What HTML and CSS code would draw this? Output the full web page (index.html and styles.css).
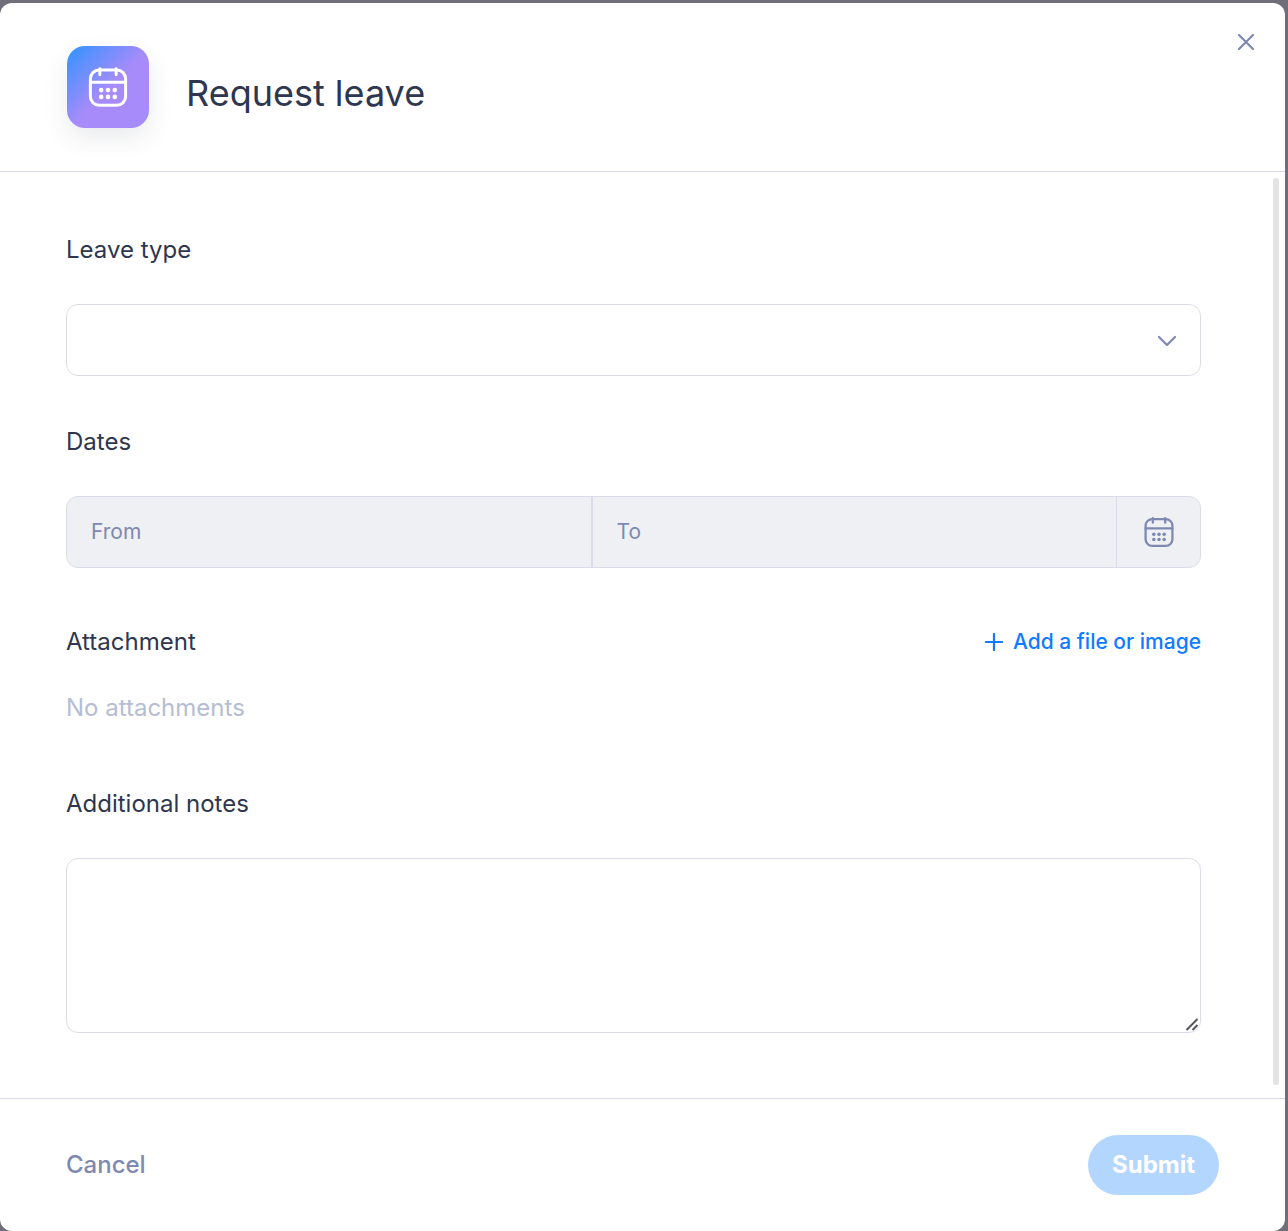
FILE: index.html
```html
<!DOCTYPE html>
<html lang="en">
<head>
    <meta charset="UTF-8">
    <meta name="viewport" content="width=device-width, initial-scale=1.0">
    <title>Request leave</title>
    <link rel="stylesheet" href="styles.css">
</head>
<body>

    <!-- Shared calendar icon -->
    <svg class="sprite" aria-hidden="true">
        <symbol id="icon-calendar" viewBox="0 0 29 31">
            <g fill="none" stroke="currentColor" stroke-width="2.2" stroke-linecap="round">
                <rect x="1.5" y="3" width="26" height="26" rx="6.5"/>
                <path d="M8.500 2v4.500M20.500 2v4.500M1.500 12h26"/>
            </g>
            <g fill="currentColor">
                <circle cx="9.500" cy="17.800" r="1.7"/>
                <circle cx="14.500" cy="17.800" r="1.7"/>
                <circle cx="19.500" cy="17.800" r="1.7"/>
                <circle cx="9.500" cy="22.800" r="1.7"/>
                <circle cx="14.500" cy="22.800" r="1.7"/>
                <circle cx="19.500" cy="22.800" r="1.7"/>
            </g>
        </symbol>
    </svg>

    <form class="modal" role="dialog" aria-labelledby="modal-title">
        <header class="modal-header">
            <span class="modal-icon">
                <svg width="40" height="42"><use href="#icon-calendar"/></svg>
            </span>
            <h1 class="modal-title" id="modal-title">Request leave</h1>
            <button type="button" class="close-btn" aria-label="Close">
                <svg width="16" height="16" viewBox="0 0 16 16" fill="none" stroke="currentColor" stroke-width="2.2" stroke-linecap="round">
                    <path d="M1 1l14 14M15 1L1 15"/>
                </svg>
            </button>
        </header>

        <div class="modal-body">
            <div class="fields">
                <div class="field">
                    <label class="label" for="leave-type">Leave type</label>
                    <div class="select-box">
                        <select class="control select" id="leave-type">
                            <option value=""></option>
                        </select>
                        <svg class="chevron" width="20" height="12" viewBox="0 0 20 12" fill="none" stroke="currentColor" stroke-width="2.2" stroke-linecap="round" stroke-linejoin="round">
                            <path d="M2 2l8 8 8-8"/>
                        </svg>
                    </div>
                </div>

                <div class="field">
                    <label class="label" for="date-from">Dates</label>
                    <div class="control dates">
                        <input class="date date-from" id="date-from" type="text" placeholder="From" disabled>
                        <input class="date" type="text" placeholder="To" aria-label="To" disabled>
                        <button type="button" class="date-btn" aria-label="Open calendar" disabled>
                            <svg width="30" height="32"><use href="#icon-calendar"/></svg>
                        </button>
                    </div>
                </div>

                <div class="attachments">
                    <div class="attachments-top">
                        <h2 class="label">Attachment</h2>
                        <button type="button" class="add-btn">
                            <svg width="18" height="18" viewBox="0 0 18 18" fill="none" stroke="currentColor" stroke-width="2.2" stroke-linecap="round">
                                <path d="M9 1v16M1 9h16"/>
                            </svg>
                            Add a file or image
                        </button>
                    </div>
                    <p class="empty">No attachments</p>
                </div>

                <div class="field">
                    <label class="label" for="notes">Additional notes</label>
                    <textarea class="control notes" id="notes"></textarea>
                </div>
            </div>
            <div class="scrollbar"></div>
        </div>

        <footer class="modal-footer">
            <button type="button" class="cancel-btn">Cancel</button>
            <button type="submit" class="submit-btn" disabled>Submit</button>
        </footer>
    </form>

</body>
</html>
```
FILE: styles.css
```css
* {
    box-sizing: border-box;
}
body {
    margin: 0;
    padding: 3px 3px 0 0;
    min-height: 100vh;
    display: flex;
    background: #6f6e79;
    font-family: Inter, "Liberation Sans", sans-serif;
    font-size: 24px;
    line-height: 32px;
    color: #2e3650;
}
button, input, select, textarea {
    font: inherit;
    color: inherit;
}
button {
    padding: 0;
    border: none;
    background: none;
    cursor: pointer;
}
button:disabled {
    cursor: default;
}
svg {
    display: block;
}
.sprite {
    position: absolute;
    width: 0;
    height: 0;
}
.modal {
    flex: 1;
    display: flex;
    flex-direction: column;
    background: #fff;
    border-radius: 12px;
}

/* Header */
.modal-header {
    display: flex;
    align-items: flex-start;
    padding: 43px 31px 43px 67px;
    border-bottom: 1px solid #dbdce9;
}
.modal-icon {
    display: flex;
    align-items: center;
    justify-content: center;
    width: 82px;
    height: 82px;
    border-radius: 18px;
    color: #fff;
    background: linear-gradient(135deg, #3a93ff 5%, #a78bfa 52%);
    box-shadow: 0 10px 24px rgba(46, 54, 80, 0.1);
}
.modal-title {
    flex: 1;
    margin: 22px 0 0 37px;
    font-size: 36px;
    line-height: 50px;
    font-weight: 400;
}
.close-btn {
    align-self: flex-start;
    margin-top: -12px;
    color: #7e89b2;
}

/* Body */
.modal-body {
    flex: 1;
    display: flex;
    padding: 6px 6px 13px 66px;
}
.fields {
    flex: 1;
    margin-right: 72px;
    padding: 56px 0 52px;
    display: flex;
    flex-direction: column;
    gap: 50px;
}
.field {
    display: flex;
    flex-direction: column;
    gap: 38px;
}
.label {
    margin: 0;
    font-size: 24px;
    font-weight: 400;
}
.control {
    width: 100%;
    border: 1px solid #dbdce9;
    border-radius: 12px;
    background: #fff;
}
.select-box {
    position: relative;
}
.select {
    display: block;
    height: 72px;
    padding: 0 64px 0 24px;
    appearance: none;
}
.chevron {
    position: absolute;
    top: 31px;
    right: 24px;
    color: #7e89b2;
    pointer-events: none;
}
.dates {
    display: flex;
    height: 72px;
    overflow: hidden;
    background: #eff0f4;
}
.date {
    flex: 1;
    min-width: 0;
    padding: 0 24px;
    border: none;
    border-right: 1px solid #dbdce9;
    background: none;
    font-size: 21px;
}
.date-from {
    border-right-width: 2px;
}
.date::placeholder {
    color: #7e89b2;
    opacity: 1;
}
.date-btn {
    display: flex;
    align-items: center;
    justify-content: center;
    width: 83px;
    color: #7e89b2;
}
.attachments {
    display: flex;
    flex-direction: column;
    gap: 34px;
    margin: 8px 0 14px;
}
.attachments-top {
    display: flex;
    align-items: center;
    justify-content: space-between;
}
.add-btn {
    display: flex;
    align-items: center;
    gap: 10px;
    font-size: 21px;
    font-weight: 500;
    color: #0f7bff;
}
.empty {
    margin: 0;
    color: #b5bdd3;
}
.notes {
    display: block;
    height: 175px;
    padding: 20px 24px;
    resize: vertical;
}
.notes::-webkit-resizer {
    background: url("data:image/svg+xml,%3Csvg xmlns='http://www.w3.org/2000/svg' width='15' height='15' stroke='%23555' stroke-width='2'%3E%3Cpath d='M1.500 13L12.500 2M7.500 13l5-5'/%3E%3C/svg%3E") no-repeat right bottom;
}
.scrollbar {
    width: 6px;
    border-radius: 3px;
    background: #e4e4e4;
}

/* Footer */
.modal-footer {
    display: flex;
    align-items: center;
    justify-content: space-between;
    padding: 36px 66px;
    border-top: 1px solid #dbdce9;
}
.cancel-btn {
    font-weight: 500;
    color: #7e89b2;
}
.submit-btn {
    height: 60px;
    padding: 0 24px;
    border-radius: 30px;
    background: #b3d6ff;
    color: #fff;
    font-weight: 700;
}
```
